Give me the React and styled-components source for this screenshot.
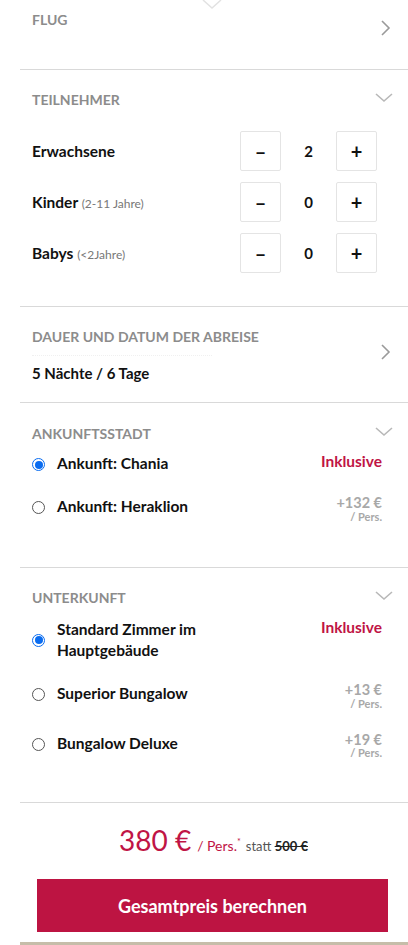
import React, { useState } from "react";
import styled, { createGlobalStyle } from "styled-components";

const GlobalStyle = createGlobalStyle`
  html, body {
    margin: 0;
    padding: 0;
    background: #fff;
  }
  body {
    font-family: Lato, "Liberation Sans", sans-serif;
    color: #111;
  }
`;

const Page = styled.div`
  width: 408px;
  height: 945px;
  overflow: hidden;
  position: relative;
  padding-left: 20px;
  box-sizing: border-box;
`;

const Pointer = styled.svg`
  position: absolute;
  top: 0;
  left: 202px;
`;

const Section = styled.section`
  border-bottom: 1.5px solid #d9d9d9;
  padding: ${(p) => p.$pad || "12px 24px 0 12px"};
  height: ${(p) => p.$h}px;
  box-sizing: border-box;
`;

const Head = styled.div`
  display: flex;
  align-items: center;
  justify-content: space-between;
`;

const Title = styled.h3`
  margin: 0;
  font-size: 14px;
  font-weight: 700;
  color: #8c8c8c;
  text-transform: uppercase;
  letter-spacing: 0;
`;

const Chevron = styled.svg`
  flex: none;
  margin-right: ${(p) => p.$mr}px;
  margin-top: ${(p) => p.$mt || 0}px;
`;

const ChevronRow = styled.div`
  display: flex;
  align-items: ${(p) => p.$align || "center"};
  justify-content: space-between;
`;

const Counter = styled.div`
  display: flex;
  align-items: center;
  justify-content: space-between;
  height: 41px;
  margin-top: ${(p) => p.$mt}px;
  padding-right: 8px;
`;

const Label = styled.span`
  font-size: 15.5px;
  font-weight: 700;
  color: #111;
`;

const Hint = styled.span`
  font-size: 12px;
  font-weight: 400;
  color: #777;
`;

const Stepper = styled.div`
  display: grid;
  grid-template-columns: 41px 55px 41px;
  align-items: center;
  margin-right: -1px;
`;

const StepButton = styled.button`
  width: 41px;
  height: 40px;
  border: 1px solid #e4e4e4;
  border-radius: 2px;
  background: #fff;
  font-family: inherit;
  font-size: 20px;
  font-weight: 700;
  color: #111;
  padding: 0;
  display: flex;
  align-items: center;
  justify-content: center;
  cursor: pointer;
`;

const Count = styled.span`
  text-align: center;
  font-size: 15px;
  font-weight: 700;
`;

const Value = styled.div`
  font-size: 15px;
  font-weight: 700;
  color: #111;
  margin-top: 8px;
`;

const Dotted = styled.div`
  width: 180px;
  border-top: 1px dotted #f0f0f0;
  margin-top: 10px;
`;

const Option = styled.label`
  display: flex;
  align-items: ${(p) => (p.$multi ? "center" : "flex-start")};
  justify-content: space-between;
  margin-top: ${(p) => p.$mt}px;
  padding-right: 2px;
  cursor: pointer;
`;

const OptionMain = styled.div`
  display: flex;
  align-items: center;
  gap: 12px;
`;

const Radio = styled.span`
  flex: none;
  width: 13px;
  height: 13px;
  border-radius: 50%;
  box-sizing: border-box;
  border: ${(p) => (p.$on ? "1.5px solid #0a6cf0" : "1px solid #555")};
  background: #fff;
  display: flex;
  align-items: center;
  justify-content: center;
  margin-top: ${(p) => (p.$multi ? "0" : "2px")};
  &::after {
    content: "";
    display: ${(p) => (p.$on ? "block" : "none")};
    width: 8px;
    height: 8px;
    border-radius: 50%;
    background: #0a6cf0;
  }
`;

const OptionText = styled.span`
  font-size: 15.5px;
  font-weight: 700;
  color: #111;
  line-height: 21px;
  max-width: ${(p) => (p.$narrow ? "165px" : "none")};
`;

const Included = styled.span`
  font-size: 15.5px;
  font-weight: 700;
  color: #c01445;
  align-self: flex-start;
  line-height: 21px;
  margin-top: -2px;
`;

const Surcharge = styled.div`
  text-align: right;
  color: #a8a8a8;
  font-weight: 700;
  line-height: 1;
  align-self: flex-start;
`;

const SurAmount = styled.div`
  font-size: 14.5px;
`;

const SurUnit = styled.div`
  font-size: 11px;
`;

const Footer = styled.div`
  padding: 20px 20px 0 17px;
  display: flex;
  flex-direction: column;
  align-items: center;
`;

const PriceLine = styled.div`
  display: flex;
  align-items: baseline;
  gap: 5px;
  margin-left: 2px;
`;

const Big = styled.span`
  font-size: 28px;
  font-weight: 400;
  color: #c01445;
  margin-right: 1px;
`;

const Per = styled.span`
  font-size: 14px;
  color: #c01445;
  sup {
    font-size: 9px;
  }
`;

const Statt = styled.span`
  font-size: 13px;
  color: #555;
  s {
    color: #222;
    font-weight: 700;
  }
`;

const Cta = styled.button`
  margin-top: 22px;
  width: 351px;
  height: 53px;
  border: none;
  background: #bd1442;
  color: #fff;
  font-family: inherit;
  font-size: 18px;
  font-weight: 700;
  cursor: pointer;
`;

const BottomBar = styled.div`
  margin-top: 10px;
  height: 4px;
  background: #c6bda9;
`;

const ChevronRight = ({ mt }) => (
  <Chevron $mr={-7} $mt={mt} width="12" height="18" viewBox="0 0 12 18">
    <path d="M3 2l7 7-7 7" fill="none" stroke="#9a9a9a" strokeWidth="1.6" />
  </Chevron>
);

const ChevronDown = () => (
  <Chevron $mr={-10} $mt={-4} width="20" height="12" viewBox="0 0 20 12">
    <path d="M2 2l8 7 8-7" fill="none" stroke="#b8b8b8" strokeWidth="1.6" />
  </Chevron>
);

const counters = [
  { key: "adults", label: "Erwachsene", hint: "", value: 2, mt: 22 },
  { key: "kids", label: "Kinder", hint: "(2-11 Jahre)", value: 0, mt: 10 },
  { key: "babies", label: "Babys", hint: "(<2Jahre)", value: 0, mt: 10 },
];

const cities = [
  { id: "chania", name: "Ankunft: Chania", extra: null, mt: 11 },
  { id: "heraklion", name: "Ankunft: Heraklion", extra: "+132 €", mt: 22 },
];

const rooms = [
  { id: "standard", name: "Standard Zimmer im Hauptgebäude", extra: null, mt: 13, multi: true },
  { id: "superior", name: "Superior Bungalow", extra: "+13 €", mt: 22 },
  { id: "deluxe", name: "Bungalow Deluxe", extra: "+19 €", mt: 24 },
];

const OptionRow = ({ opt, selected, onPick }) => (
  <Option $mt={opt.mt} $multi={opt.multi} onClick={() => onPick(opt.id)}>
    <OptionMain>
      <Radio $on={selected} $multi={opt.multi} />
      <OptionText $narrow={opt.multi}>{opt.name}</OptionText>
    </OptionMain>
    {opt.extra ? (
      <Surcharge>
        <SurAmount>{opt.extra}</SurAmount>
        <SurUnit>/ Pers.</SurUnit>
      </Surcharge>
    ) : (
      <Included>Inklusive</Included>
    )}
  </Option>
);

export default function App() {
  const [city, setCity] = useState("chania");
  const [room, setRoom] = useState("standard");

  return (
    <Page>
      <GlobalStyle />
      <Pointer width="20" height="10" viewBox="0 0 20 10">
        <path d="M1 0l9 8 9-8" fill="none" stroke="#e2e2e2" strokeWidth="1.5" />
      </Pointer>

      <Section $h={70} $pad="11px 24px 0 12px">
        <ChevronRow $align="flex-start">
          <Title>Flug</Title>
          <ChevronRight mt={8} />
        </ChevronRow>
      </Section>

      <Section $h={237} $pad="21px 24px 0 12px">
        <Head>
          <Title>Teilnehmer</Title>
          <ChevronDown />
        </Head>
        {counters.map((c) => (
          <Counter key={c.key} $mt={c.mt}>
            <Label>
              {c.label} {c.hint && <Hint>{c.hint}</Hint>}
            </Label>
            <Stepper>
              <StepButton>–</StepButton>
              <Count>{c.value}</Count>
              <StepButton>+</StepButton>
            </Stepper>
          </Counter>
        ))}
      </Section>

      <Section $h={96} $pad="21px 24px 0 12px">
        <ChevronRow>
          <div>
            <Title>Dauer und Datum der Abreise</Title>
            <Dotted />
            <Value>5 Nächte / 6 Tage</Value>
          </div>
          <ChevronRight mt={-6} />
        </ChevronRow>
      </Section>

      <Section $h={165} $pad="22px 24px 0 12px">
        <Head>
          <Title>Ankunftsstadt</Title>
          <ChevronDown />
        </Head>
        {cities.map((o) => (
          <OptionRow key={o.id} opt={o} selected={city === o.id} onPick={setCity} />
        ))}
      </Section>

      <Section $h={235} $pad="21px 24px 0 12px">
        <Head>
          <Title>Unterkunft</Title>
          <ChevronDown />
        </Head>
        {rooms.map((o) => (
          <OptionRow key={o.id} opt={o} selected={room === o.id} onPick={setRoom} />
        ))}
      </Section>

      <Footer>
        <PriceLine>
          <Big>380 €</Big>
          <Per>
            / Pers.<sup>*</sup>
          </Per>
          <Statt>
            statt <s>500 €</s>
          </Statt>
        </PriceLine>
        <Cta>Gesamtpreis berechnen</Cta>
      </Footer>
      <BottomBar />
    </Page>
  );
}
